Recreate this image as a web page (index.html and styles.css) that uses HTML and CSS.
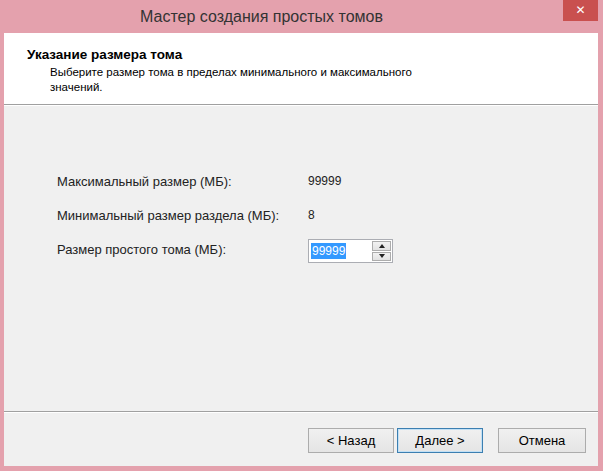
FILE: index.html
```html
<!DOCTYPE html>
<html lang="ru">
<head>
    <meta charset="UTF-8">
    <title>Мастер создания простых томов</title>
    <link rel="stylesheet" href="styles.css">
</head>
<body>

    <div class="window">
        <div class="titlebar">
            <span class="title">Мастер создания простых томов</span>
            <button class="close">&#x2715;</button>
        </div>

        <div class="client">
            <div class="header">
                <div class="header-title">Указание размера тома</div>
                <div class="header-text">Выберите размер тома в пределах минимального и максимального<br>значений.</div>
            </div>

            <div class="content">
                <div class="fields">
                    <div class="label">Максимальный размер (МБ):</div>
                    <div class="value">99999</div>

                    <div class="label">Минимальный размер раздела (МБ):</div>
                    <div class="value">8</div>

                    <div class="label">Размер простого тома (МБ):</div>
                    <div class="value">
                        <div class="spinbox">
                            <div class="spin-text"><span class="selected">99999</span></div>
                            <div class="spin-buttons">
                                <div class="spin-btn"><span class="arrow-up"></span></div>
                                <div class="spin-btn"><span class="arrow-down"></span></div>
                            </div>
                        </div>
                    </div>
                </div>
            </div>

            <div class="footer">
                <button class="btn">&lt; Назад</button>
                <button class="btn btn-default">Далее &gt;</button>
                <button class="btn btn-cancel">Отмена</button>
            </div>
        </div>
    </div>

</body>
</html>
```

FILE: styles.css
```css
body {
    margin: 0;
    padding: 0;
    background: #e4a1ad;
    font-family: 'Liberation Sans', Arial, sans-serif;
}

.window {
    width: 603px;
    height: 471px;
    display: flex;
    flex-direction: column;
    position: relative;
}

.titlebar {
    height: 33px;
    display: flex;
    align-items: center;
    justify-content: center;
    padding-right: 80px;
    box-sizing: border-box;
}

.title {
    font-size: 16px;
    color: #333333;
    padding-top: 1px;
}

.close {
    position: absolute;
    top: 0;
    right: 5px;
    width: 35px;
    height: 21px;
    border: none;
    padding: 0;
    background: #c9504f;
    color: #ffffff;
    font-size: 12px;
    font-weight: bold;
    font-family: 'DejaVu Sans', sans-serif;
    line-height: 21px;
}

.client {
    margin: 0 5px 5px 4px;
    flex: 1;
    display: flex;
    flex-direction: column;
    background: #f0f0f0;
}

.header {
    height: 72px;
    background: #ffffff;
    border-bottom: 1px solid #a0a0a0;
    box-shadow: 0 1px 0 #ffffff;
    box-sizing: border-box;
    padding: 14px 0 0 23px;
}

.header-title {
    font-size: 13.5px;
    font-weight: bold;
    color: #000000;
}

.header-text {
    font-size: 11.5px;
    color: #000000;
    padding-left: 23px;
    margin-top: 3px;
    line-height: 15px;
}

.content {
    flex: 1;
    padding: 59px 0 0 53px;
}

.fields {
    display: grid;
    grid-template-columns: 251px auto;
    grid-auto-rows: 34px;
    align-items: center;
}

.label, .value {
    font-size: 13px;
    color: #222222;
}

.value {
    font-size: 12px;
}

.spinbox {
    display: flex;
    width: 85px;
    height: 24px;
    border: 1px solid #abadb3;
    box-sizing: border-box;
    background: #ffffff;
    margin-top: 4px;
}

.spin-text {
    flex: 1;
    display: flex;
    align-items: center;
    padding-left: 2px;
}

.selected {
    background: #3399ff;
    color: #ffffff;
    line-height: 16px;
    padding: 0 1px;
}

.spin-buttons {
    width: 19px;
    display: flex;
    flex-direction: column;
    gap: 1px;
    padding: 1px 1px 1px 0;
}

.spin-btn {
    flex: 1;
    background: linear-gradient(#f2f2f2, #e2e2e2);
    border: 1px solid #acacac;
    display: flex;
    align-items: center;
    justify-content: center;
}

.arrow-up {
    border-left: 3px solid transparent;
    border-right: 3px solid transparent;
    border-bottom: 4px solid #222222;
}

.arrow-down {
    border-left: 3px solid transparent;
    border-right: 3px solid transparent;
    border-top: 4px solid #222222;
}

.footer {
    height: 55px;
    border-top: 1px solid #a0a0a0;
    box-shadow: inset 0 1px 0 #ffffff;
    box-sizing: border-box;
    display: flex;
    justify-content: flex-end;
    padding: 16px 12px 0 0;
    gap: 3px;
}

.btn {
    width: 86px;
    height: 25px;
    font-family: 'Liberation Sans', Arial, sans-serif;
    font-size: 13px;
    color: #000000;
    background: linear-gradient(#f0f0f0, #e5e5e5);
    border: 1px solid #acacac;
    padding: 0;
}

.btn-default {
    border-color: #3c7fb1;
    box-shadow: inset 0 0 0 1px #c2e0f5;
}

.btn-cancel {
    margin-left: 12px;
    width: 88px;
}
```
